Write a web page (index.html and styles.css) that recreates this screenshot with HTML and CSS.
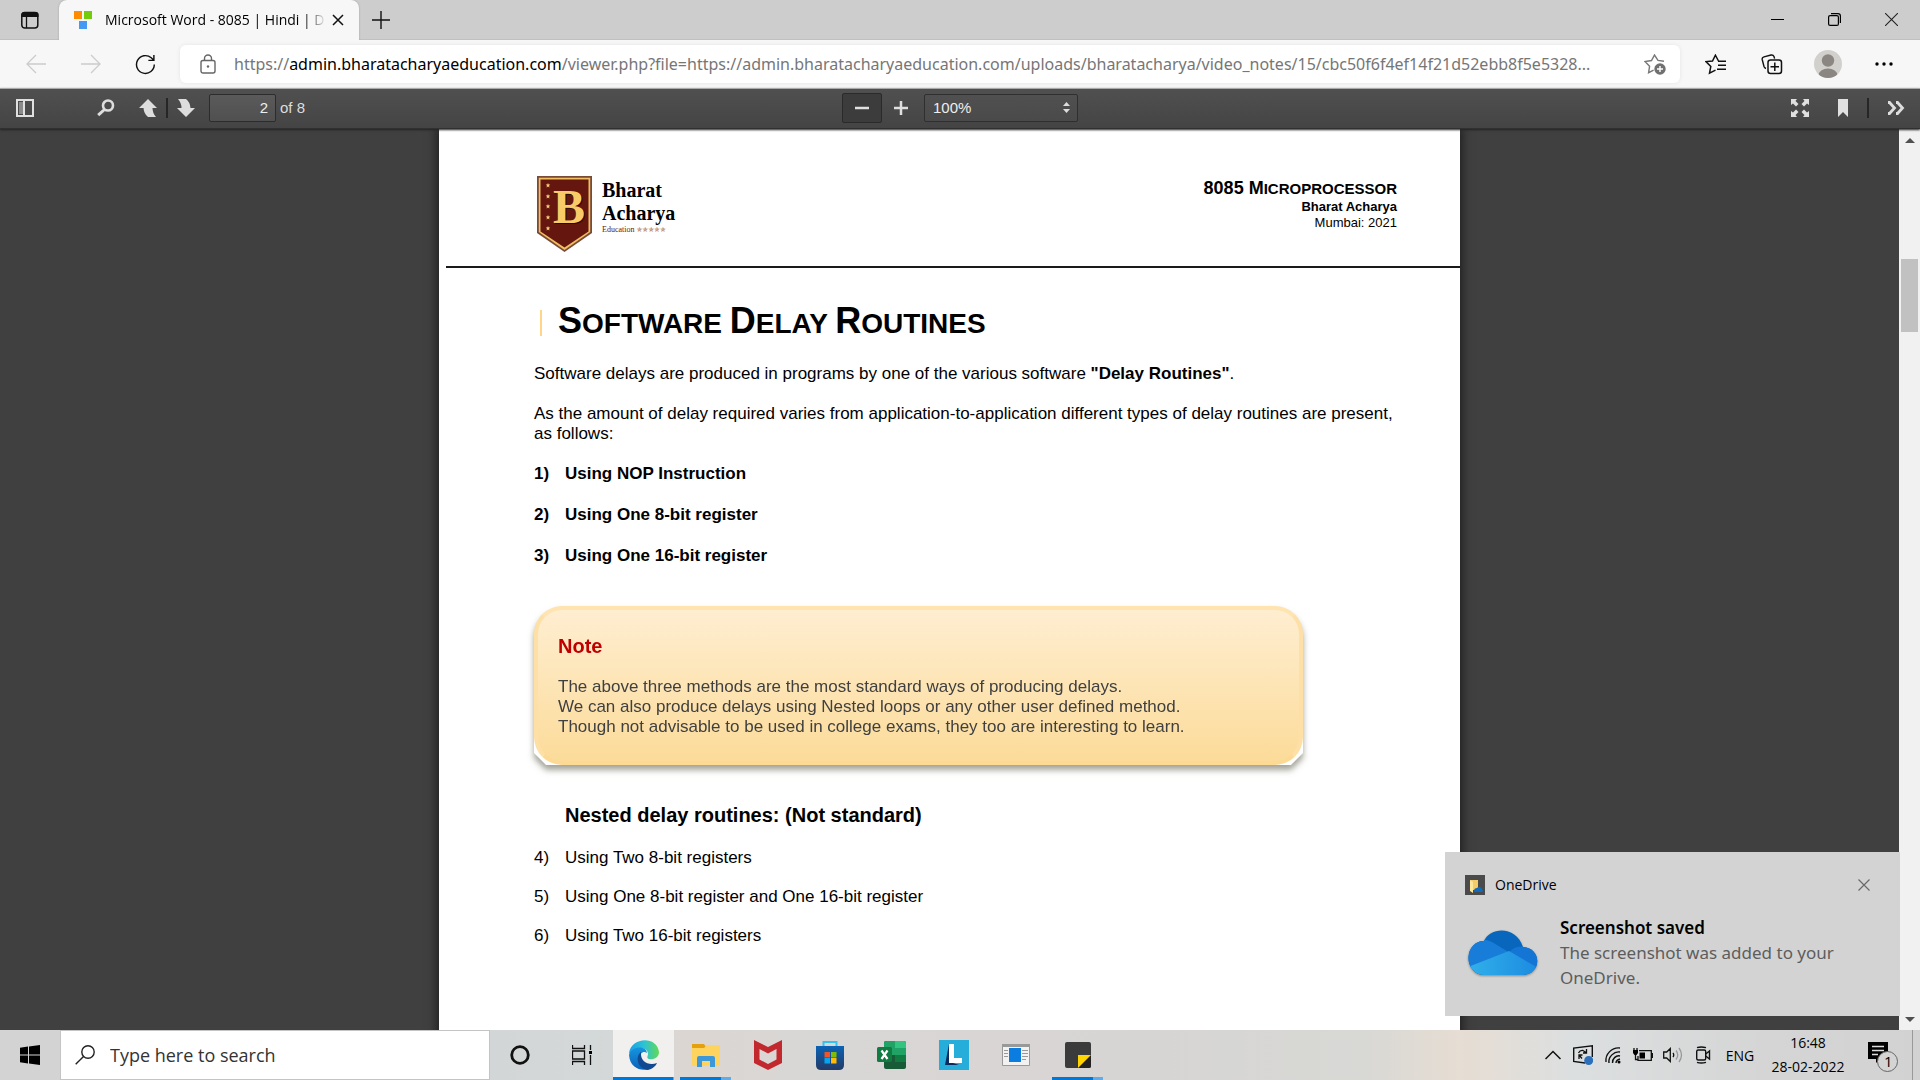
FILE: index.html
```html
<!DOCTYPE html>
<html lang="en">
<head>
<meta charset="utf-8">
<title>Microsoft Word - 8085 | Hindi | Delay Routines</title>
<link rel="stylesheet" href="styles.css">
</head>
<body>
<div class="desktop">
  <header class="tabstrip">
    <button class="tab-actions" aria-label="Tab actions menu"><svg width="20" height="20" viewBox="0 0 20 20"><rect x="1.800" y="2.500" width="16" height="15.500" rx="3" fill="none" stroke="#111" stroke-width="1.500"/><path d="M1.500 7V4.500Q1.500 2 4 2h12q2.500 0 2.500 2.500V7z" fill="#111"/><path d="M6.500 7v11" stroke="#111" stroke-width="1.300"/></svg></button>
    <div class="tab">
      <svg width="18" height="18" viewBox="0 0 18 18"><path fill="#ff8c00" d="M0 0h8v8H0z"/><path fill="#73cc0a" d="M10 0h8v8h-8z"/><path fill="#4499f2" d="M5 10h8v8H5z"/></svg>
      <span class="tab-title">Microsoft Word - 8085 | Hindi | D</span>
      <button class="tab-close" aria-label="Close tab"><svg width="12" height="12" viewBox="0 0 12 12"><path d="M1 1l10 10M11 1L1 11" stroke="#111" stroke-width="1.500"/></svg></button>
    </div>
    <button class="new-tab" aria-label="New tab"><svg width="18" height="18" viewBox="0 0 18 18"><path d="M9 0v18M0 9h18" stroke="#111" stroke-width="1.400"/></svg></button>
    <div class="window-controls">
      <button aria-label="Minimize"><svg width="13" height="13" viewBox="0 0 13 13"><path d="M0 6.500h13" stroke="#000"/></svg></button>
      <button aria-label="Restore"><svg width="13" height="13" viewBox="0 0 13 13"><rect x=".6" y="2.600" width="9.800" height="9.800" rx="1.500" fill="none" stroke="#000" stroke-width="1.200"/><path d="M3 .6h7Q12.400.6 12.400 3v7" fill="none" stroke="#000" stroke-width="1.200"/></svg></button>
      <button aria-label="Close"><svg width="13" height="13" viewBox="0 0 13 13"><path d="M0 0l13 13M13 0L0 13" stroke="#222" stroke-width="1.100"/></svg></button>
    </div>
  </header>

  <nav class="toolbar">
    <button class="nav" aria-label="Back" disabled><svg width="20" height="20" viewBox="0 0 20 20"><path d="M20 10H1M10 1L1 10l9 9" fill="none" stroke="#ccc" stroke-width="1.300"/></svg></button>
    <button class="nav" aria-label="Forward" disabled><svg width="20" height="20" viewBox="0 0 20 20"><path d="M0 10h19M10 1l9 9-9 9" fill="none" stroke="#ccc" stroke-width="1.300"/></svg></button>
    <button class="nav" aria-label="Refresh"><svg width="21" height="21" viewBox="0 0 22 22"><path d="M20.200 11A9.300 9.300 0 1 1 17 4l2.500 2.300M19.800 1v5.700H14" fill="none" stroke="#111" stroke-width="1.500"/></svg></button>
    <div class="address">
      <svg width="16" height="20" viewBox="0 0 16 20"><rect x="1" y="6.500" width="14" height="12.500" rx="2" fill="none" stroke="#666" stroke-width="1.400"/><path d="M4.500 6.500V4.500a3.500 3.500 0 0 1 7 0v2" fill="none" stroke="#666" stroke-width="1.400"/><circle cx="8" cy="12.500" r="1.200" fill="#666"/></svg>
      <span class="url">https://<b>admin.bharatacharyaeducation.com</b>/viewer.php?file=https://admin.bharatacharyaeducation.com/uploads/bharatacharya/video_notes/15/cbc50f6f4ef14f21d52ebb8f5e5328...</span>
      <button class="add-fav" aria-label="Add this page to favorites"><svg width="22" height="21" viewBox="0 0 22 21"><path d="M20 7.200l-6-.8L10.500 1 7.500 6.500 1 7.500l4.600 4.700-1 6.500 5-2.600" fill="none" stroke="#777" stroke-width="1.400"/><circle cx="16" cy="15" r="5.700" fill="#707070"/><path d="M16 12v6M13 15h6" stroke="#fff" stroke-width="1.400"/></svg></button>
    </div>
    <button aria-label="Favorites"><svg width="22" height="21" viewBox="0 0 22 21"><path d="M13.500 7L10.400 1.200 7.500 7 1 7.600l4.800 4.800-1.300 6.800 6-3M13 7.200h8M13 11.200h8M12 15.200h9" fill="none" stroke="#111" stroke-width="1.500"/></svg></button>
    <button aria-label="Collections"><svg width="22" height="21" viewBox="0 0 22 21"><path d="M5 14.500Q3.500 14 3 12.500L1.200 5.500Q.8 3.500 3 2.800L10 1q2.200-.4 3 1.600l.6 2" fill="none" stroke="#111" stroke-width="1.400"/><rect x="7" y="6" width="13.500" height="13.500" rx="2.500" fill="#f7f7f7" stroke="#111" stroke-width="1.500"/><path d="M13.800 8.500v8.500M9.500 12.800H18" stroke="#111" stroke-width="1.500"/></svg></button>
    <button aria-label="Profile"><svg width="28" height="28" viewBox="0 0 28 28"><clipPath id="avatar"><circle cx="14" cy="14" r="14"/></clipPath><g clip-path="url(#avatar)"><path fill="#d2d0cc" d="M0 0h28v28H0z"/><circle cx="14" cy="10.500" r="6.200" fill="#8b8682"/><ellipse cx="14" cy="25.500" rx="9.500" ry="7" fill="#8b8682"/></g></svg></button>
    <button aria-label="Settings and more"><svg width="18" height="4" viewBox="0 0 18 4"><circle cx="2" cy="2" r="1.700"/><circle cx="9" cy="2" r="1.700"/><circle cx="16" cy="2" r="1.700"/></svg></button>
  </nav>

  <div class="pdf-toolbar">
    <div class="pdf-left">
      <button class="toggle-sidebar" aria-label="Toggle sidebar"><svg width="18" height="18" viewBox="0 0 18 18"><path fill="#e0e0e0" fill-rule="evenodd" d="M0 0h18v18H0zM2 2v14h14V2z"/><path fill="#8a8a8a" d="M3 3h4v12H3z"/><path fill="#e0e0e0" d="M7 2h2v14H7z"/></svg></button>
      <button aria-label="Find"><svg width="18" height="18" viewBox="0 0 18 18"><circle cx="11" cy="6.500" r="5" fill="none" stroke="#ddd" stroke-width="2.600"/><path d="M7.500 10.500L1.200 16.200" stroke="#ddd" stroke-width="3"/></svg></button>
      <div class="pager">
        <button aria-label="Previous page"><svg width="18" height="18" viewBox="0 0 18 18"><path fill="#ddd" d="M9 0l9 9h-4.500q0 5 3.500 9H9Q5 15 4.500 9H0z"/></svg></button>
        <i class="split"></i>
        <button aria-label="Next page"><svg width="18" height="18" viewBox="0 0 18 18"><path fill="#ddd" d="M9 18l9-9h-4.500Q13 3 9 0H1q3.500 4 3.500 9H0z"/></svg></button>
      </div>
      <label class="page-field"><input type="text" value="2" aria-label="Page"><span>of 8</span></label>
    </div>
    <div class="pdf-zoom">
      <button class="zoom-out" aria-label="Zoom out"><svg width="14" height="14" viewBox="0 0 14 14"><path d="M0 7h14" stroke="#e0e0e0" stroke-width="2.500"/></svg></button>
      <button class="zoom-in" aria-label="Zoom in"><svg width="14" height="14" viewBox="0 0 14 14"><path d="M0 7h14M7 0v14" stroke="#e0e0e0" stroke-width="2.500"/></svg></button>
      <div class="scale"><select aria-label="Zoom"><option>100%</option></select><svg width="7" height="11" viewBox="0 0 7 11"><path fill="#ddd" d="M3.500 0L7 4H0zM3.500 11L7 7H0z"/></svg></div>
    </div>
    <div class="pdf-right">
      <button aria-label="Presentation mode"><svg width="18" height="18" viewBox="0 0 18 18"><path fill="#e0e0e0" d="M0 0h6L4.500 2l3 3L5 7.500l-3-3L0 6zM18 0v6l-2-1.500-3 3L10.500 5l3-3L12 0zM0 18v-6l2 1.500 3-3L7.500 13l-3 3L6 18zM18 18h-6l1.500-2-3-3 2.500-2.500 3 3 2-1.500z"/></svg></button>
      <button aria-label="Current view"><svg width="12" height="18" viewBox="0 0 12 18"><path fill="#e0e0e0" d="M1 0h10v18l-5-5-5 5z"/></svg></button>
      <i class="split"></i>
      <button aria-label="Tools"><svg width="18" height="14" viewBox="0 0 18 14"><path d="M1 1.500h1.500L7.500 7l-5 5.500H1M9 1.500h1.500L15.500 7l-5 5.500H9" fill="none" stroke="#ddd" stroke-width="2.800"/></svg></button>
    </div>
  </div>

  <main class="viewer">
    <div class="canvas">
      <article class="page">
        <header class="page-head">
          <div class="brand">
            <svg width="55" height="76" viewBox="0 0 55 76"><path fill="#7a4a35" d="M0 0h55v57L27.500 76 0 57z"/><path fill="#f0bf62" d="M1.800 1.800h51.400V56L27.500 74 1.800 56z"/><path fill="#65160f" d="M3.500 3.500h48v52l-24 16-24-16z"/><g fill="#f7cc7a"><path id="star" d="M11 7l.7 1.500h1.600L12 9.700l.5 1.700L11 10.500l-1.500.9.500-1.700-1.300-1.200h1.600z"/><use href="#star" y="11"/><use href="#star" y="21"/><use href="#star" y="32"/><use href="#star" y="43"/></g><text x="17" y="48" class="crest-shadow">B</text><text x="16" y="47" class="crest">B</text></svg>
            <div class="brand-name"><strong>Bharat</strong><strong>Acharya</strong><small>Education <span>✯✯✯✯✯</span></small></div>
          </div>
          <div class="course"><p class="course-title"><span>8085 M</span>icroprocessor</p><p class="author">Bharat Acharya</p><p class="place">Mumbai: 2021</p></div>
        </header>
        <div class="page-body">
          <h1><span>S</span>oftware <span>D</span>elay <span>R</span>outines</h1>
          <p>Software delays are produced in programs by one of the various software <b>"Delay Routines"</b>.</p>
          <p>As the amount of delay required varies from application-to-application different types of delay routines are present,<br>as follows:</p>
          <ol class="methods">
            <li><span>1)</span>Using NOP Instruction</li>
            <li><span>2)</span>Using One 8-bit register</li>
            <li><span>3)</span>Using One 16-bit register</li>
          </ol>
          <section class="note">
            <div class="note-face">
              <h2>Note</h2>
              <p>The above three methods are the most standard ways of producing delays.<br>We can also produce delays using Nested loops or any other user defined method.<br>Though not advisable to be used in college exams, they too are interesting to learn.</p>
            </div>
          </section>
          <h3>Nested delay routines: (Not standard)</h3>
          <ol class="nested">
            <li><span>4)</span>Using Two 8-bit registers</li>
            <li><span>5)</span>Using One 8-bit register and One 16-bit register</li>
            <li><span>6)</span>Using Two 16-bit registers</li>
          </ol>
        </div>
      </article>
    </div>
    <div class="scrollbar"><svg width="10" height="5" viewBox="0 0 10 5"><path fill="#505050" d="M0 5l5-5 5 5z"/></svg><div class="track"><div class="thumb"></div></div><svg width="10" height="5" viewBox="0 0 10 5"><path fill="#505050" d="M0 0l5 5 5-5z"/></svg></div>
    <aside class="toast">
      <div class="toast-head">
        <svg width="20" height="20" viewBox="0 0 20 20"><path fill="#4a4a4a" d="M0 0h20v20H0z"/><path fill="#f4cd68" d="M5 5h8v10H7z"/><path fill="#ffe79c" d="M5 5l3 2v11l-3-2z"/><path fill="#0f6cbd" d="M9 15a3 3 0 0 1 3-2 3 3 0 0 1 5 1 1.800 1.800 0 0 1 0 3h-7q-1.500-.6-1-2z"/></svg>
        <span>OneDrive</span>
        <button aria-label="Dismiss"><svg width="12" height="12" viewBox="0 0 12 12"><path d="M.5.5l11 11M11.500.5l-11 11" stroke="#666" stroke-width="1.100"/></svg></button>
      </div>
      <div class="toast-body">
        <svg class="cloud" width="70" height="46" viewBox="0 0 70 46"><defs><clipPath id="cloud"><path d="M15 45A15 17 0 0 1 16 11C22-3 48-5 55 17 74 18 74 44 55 45z"/></clipPath><linearGradient id="sky" x2="1"><stop stop-color="#31b0ea"/><stop offset="1" stop-color="#1c8be0"/></linearGradient></defs><g clip-path="url(#cloud)"><path fill="#0867bd" d="M0 0h70v46H0z"/><path fill="#187dd9" d="M0 11q15-4 24 1l18 11L2 38H0z"/><path fill="#1475d5" d="M41 22q7-7 18-5l12 4v19z"/><path fill="url(#sky)" d="M0 37l41-16 29 17v8H0z"/></g></svg>
        <div><strong>Screenshot saved</strong><p>The screenshot was added to your OneDrive.</p></div>
      </div>
    </aside>
  </main>

  <footer class="taskbar">
    <button class="start" aria-label="Start"><svg width="20" height="20" viewBox="0 0 20 20"><path d="M0 2.800L8 1.600V9.500H0zM9 1.400L20 0v9.500H9zM0 10.500h8v7.900L0 17.200zM9 10.500h11V20L9 18.600z"/></svg></button>
    <label class="search"><svg width="20" height="20" viewBox="0 0 20 20"><circle cx="13" cy="7" r="6.200" fill="none" stroke="#222" stroke-width="1.400"/><path d="M8.500 11.500L.7 19.300" stroke="#222" stroke-width="1.400"/></svg><input type="text" placeholder="Type here to search" aria-label="Search"></label>
    <div class="apps">
      <button class="cortana" aria-label="Cortana"><svg width="20" height="20" viewBox="0 0 20 20"><circle cx="10" cy="10" r="8.300" fill="none" stroke="#111" stroke-width="2.800"/></svg></button>
      <button aria-label="Task view"><svg width="20" height="20" viewBox="0 0 20 20"><path d="M.5 0v3.500h12V0M.5 20v-3.500h12V20M.5 6h12v8H.5zM18.500 0v5M18.500 10v10" fill="none" stroke="#111" stroke-width="1.300"/><path d="M17 6h3v3h-3z"/></svg></button>
      <button class="active" aria-label="Microsoft Edge"><svg width="30" height="30" viewBox="0 0 30 30"><defs><linearGradient id="e1" x2="1"><stop stop-color="#1b9de2"/><stop offset=".5" stop-color="#2cc3d5"/><stop offset="1" stop-color="#62d957"/></linearGradient><linearGradient id="e2" y2="1" x2="0"><stop stop-color="#1594df"/><stop offset="1" stop-color="#0b62b8"/></linearGradient></defs><path fill="url(#e1)" d="M0 14C1-3 28-5 30 12c0 6-6 8-10 7-3-1-1-3-1-5C19 7 7 5 0 14z"/><path fill="url(#e2)" d="M0 15C2 6 17 5 18 13c-4-3-8 1-7 6 1 8 8 10 14 7-7 7-24 5-25-11z"/><path fill="#114a91" d="M12 12c-6 4-4 17 7 18 4-1 8-4 9-7-8 3-17-1-16-11z"/></svg></button>
      <button class="running" aria-label="File Explorer"><svg width="28" height="24" viewBox="0 0 28 24"><path fill="#e5a00d" d="M0 1h12l2 3v4H0z"/><path fill="#ffd45e" d="M0 5h12l3-3h13v21H0z"/><path fill="#3d98d9" d="M5 24V15q0-2 2-2h14q2 0 2 2v9h-5v-6h-8v6z"/></svg></button>
      <button aria-label="McAfee"><svg width="28" height="30" viewBox="0 0 28 30"><path fill="#c2292e" fill-rule="evenodd" d="M0 0l14 7L28 0v23l-14 7-14-7zM5.500 9v10.500L14 24l8.500-4.500V9L14 13.500z"/></svg></button>
      <button aria-label="Microsoft Store"><svg width="30" height="30" viewBox="0 0 30 30"><defs><linearGradient id="bag" y2="1" x2="0"><stop stop-color="#0b63b5"/><stop offset="1" stop-color="#243a66"/></linearGradient></defs><path d="M8.500 7V2h13v5" fill="none" stroke="#35c2ee" stroke-width="2"/><path fill="url(#bag)" d="M1 6h28v19q0 5-5 5H6q-5 0-5-5z"/><path fill="#f35325" d="M9.500 12H15v5.500H9.500z"/><path fill="#81bc06" d="M16 12h5.500v5.500H16z"/><path fill="#05a6f0" d="M9.500 18H15v5.500H9.500z"/><path fill="#ffba08" d="M16 18h5.500v5.500H16z"/></svg></button>
      <button aria-label="Excel"><svg width="30" height="28" viewBox="0 0 30 28"><rect x="7" width="22" height="28" rx="2" fill="#185c37"/><path fill="#21a366" d="M7 2q0-2 2-2h9v14H7z"/><path fill="#33c481" d="M18 0h9q2 0 2 2v5H18z"/><path fill="#21a366" d="M18 7h11v7H18z"/><path fill="#107c41" d="M18 14h11v7H18z"/><rect y="6" width="15" height="15" rx="1.500" fill="#107c41"/><path d="M4.500 9.500l6 8.500M10.500 9.500l-6 8.500" stroke="#fff" stroke-width="2.200"/></svg></button>
      <button aria-label="Lenovo"><svg width="30" height="30" viewBox="0 0 30 30"><path fill="#27add9" d="M0 0h30v30H0z"/><path fill="#0b2a5e" d="M10 4L6 25h14l-9-3z"/><path fill="#fff" d="M10 4h5v14h8v5H10z"/></svg></button>
      <button aria-label="App window"><svg width="28" height="22" viewBox="0 0 28 22"><path fill="#f2f2f2" stroke="#999" d="M.5.5h27v21H.5z"/><path fill="#999" d="M0 0h28v3H0z"/><path fill="#0b7de0" d="M7 4h12v14H7z"/><path d="M2 6.500h4M2 9.500h4M2 12.500h4M20 6.500h6M20 9.500h6M20 12.500h6M20 15.500h4" stroke="#999"/></svg></button>
      <button class="running" aria-label="Sticky Notes"><svg width="26" height="26" viewBox="0 0 26 26"><rect width="26" height="26" rx="2" fill="#3b3b3b"/><path fill="#222" d="M13 13h13v11q0 2-2 2H13z"/><path fill="#ffd400" d="M13 13h13L13 26z"/></svg></button>
    </div>
    <div class="tray">
      <button aria-label="Show hidden icons"><svg width="16" height="10" viewBox="0 0 16 10"><path d="M.5 9L8 1.500 15.500 9" fill="none" stroke="#111" stroke-width="1.500"/></svg></button>
      <button aria-label="Sync status"><svg width="20" height="20" viewBox="0 0 20 20"><path d="M12 18L.7 16.500V3L19.300.8V12" fill="none" stroke="#111" stroke-width="1.400"/><path d="M5.500 8Q7 5 10 5.500l3 2M13.500 4v4H10M6 14v-4h3.500M6 10l3 3.500" fill="none" stroke="#111" stroke-width="1.300"/><circle cx="15.700" cy="15.500" r="4.500" fill="#2c6fba"/></svg></button>
      <button aria-label="Network"><svg width="18" height="18" viewBox="0 0 18 18"><path d="M2 16C1 8 8 1 16 2M5 17C4 11 10 5 16 6M8.500 17C8 13 12 9 16 10M12 17q0-3 4-4" fill="none" stroke="#111" stroke-width="1.400"/><circle cx="15" cy="16" r="1.500"/></svg></button>
      <button aria-label="Battery"><svg width="20" height="14" viewBox="0 0 20 14"><path d="M6 2.700h12.300v9.600H5V8M19.500 5v5M1 0v3M4 0v3M2.500 5v6.500H5" fill="none" stroke="#111" stroke-width="1.300"/><path d="M0 2h5v3L3.500 7h-2L0 5zM6.500 4.500H12v6H6.500z"/></svg></button>
      <button aria-label="Volume"><svg width="20" height="16" viewBox="0 0 20 16"><path d="M.7 5v6h3L7.300 14.500v-13L3.700 5zM10 6q1.500 2 0 4" fill="none" stroke="#111" stroke-width="1.300"/><path d="M13 3.500q3.500 4.500 0 9M16 1q5 7 0 14" fill="none" stroke="#999" stroke-width="1.300"/></svg></button>
      <button aria-label="Meet now"><svg width="16" height="18" viewBox="0 0 16 18"><rect x="1.700" y="4" width="9" height="10" rx="1.500" fill="none" stroke="#111" stroke-width="1.400"/><path d="M10.700 8L14.500 5v8l-3.800-3M2 1.700q4-1.500 9 0M2 16.300q4 1.500 9 0" fill="none" stroke="#111" stroke-width="1.400"/></svg></button>
      <button class="lang">ENG</button>
      <button class="clock"><span>16:48</span><span>28-02-2022</span></button>
      <button class="alerts" aria-label="Notifications"><svg width="30" height="30" viewBox="0 0 30 30"><path d="M0 0h20v17h-8l-4 4v-4H0z"/><path d="M4 4.500h12M4 8.500h12M4 12.500h6" stroke="#ddd" stroke-width="1.300"/><circle cx="19.500" cy="19.500" r="10" fill="#d4d4d4" stroke="#666"/><text x="16" y="25" class="count">1</text></svg></button>
      <i class="peek"></i>
    </div>
  </footer>
</div>
</body>
</html>
```
FILE: styles.css
```css
* { box-sizing: border-box; }
body { margin: 0; font-family: "Open Sans", "Noto Sans", sans-serif; color: #000; }
button { border: 0; padding: 0; background: none; font: inherit; color: inherit; display: flex; align-items: center; justify-content: center; }
svg { display: block; flex: none; }
p, h1, h2, h3, ol { margin: 0; padding: 0; }

.desktop { height: 100vh; display: flex; flex-direction: column; overflow: hidden; }

/* Tab strip */
.tabstrip { flex: none; height: 40px; display: flex; background: #cdcdcd; border-bottom: 1px solid #c0c0c0; }
.tab-actions { width: 59px; }
.tab { width: 300px; height: 40px; display: flex; align-items: center; padding: 0 15px; background: #f7f7f7; border-radius: 8px 8px 0 0; box-shadow: 0 0 2px #999; clip-path: inset(-3px -3px 0 -3px); }
.tab-title { flex: 1; margin: 0 6px 0 13px; font-size: 14px; line-height: 20px; white-space: nowrap; -webkit-mask-image: linear-gradient(90deg, #000 90%, transparent); mask-image: linear-gradient(90deg, #000 90%, transparent); }
.tab-close { width: 12px; height: 20px; }
.new-tab { width: 44px; }
.window-controls { margin-left: auto; display: flex; }
.window-controls button { width: 57px; }

/* Browser toolbar */
.toolbar { flex: none; height: 48px; display: flex; align-items: center; padding: 0 8px; background: #f7f7f7; }
.toolbar > button { width: 56px; height: 38px; }
.toolbar > .nav { width: 55px; }
.address { flex: 1; min-width: 0; height: 38px; margin: 0 8px 0 7px; padding: 0 14px 0 20px; display: flex; align-items: center; background: #fff; border-radius: 6px; box-shadow: 0 0 4px #e4e4e4; }
.url { flex: 1; min-width: 0; margin-left: 18px; font: 16px/24px "Noto Sans", "Open Sans", sans-serif; color: #767676; white-space: nowrap; overflow: hidden; }
.url b { font-weight: 400; color: #000; }

/* Document viewer controls */
.pdf-toolbar { flex: none; height: 41px; display: grid; grid-template-columns: 1fr auto 1fr; align-items: center; background: linear-gradient(#505050, #444); border-top: 1px solid #aaa; border-bottom: 1px solid #303030; box-shadow: 0 1px 2px #222; color: #ddd; font: 15px "Liberation Sans", Arial, sans-serif; z-index: 1; }
.pdf-left, .pdf-right, .pdf-zoom, .pager, .page-field { display: flex; align-items: center; }
.pdf-toolbar > div { padding-bottom: 2px; }
.pdf-left { padding-left: 16px; gap: 24px; }
.toggle-sidebar { margin-right: 39px; }
.pager { gap: 9px; }
.split { width: 2px; height: 20px; background: #262626; }
.page-field { margin-left: -10px; gap: 4px; }
.page-field input { width: 67px; height: 28px; padding: 0 7px; text-align: right; color: #eee; background: linear-gradient(#5a5a5a, #505050); border: 1px solid #2c2c2c; border-radius: 2px; font: inherit; }
.zoom-out { width: 40px; height: 30px; background: #3c3c3c; border: 1px solid #2a2a2a; border-radius: 2px; }
.zoom-in { width: 38px; height: 30px; }
.scale { display: grid; align-items: center; margin-left: 4px; }
.scale select, .scale svg { grid-area: 1 / 1; }
.scale svg { justify-self: end; margin-right: 8px; pointer-events: none; }
.scale select { appearance: none; width: 154px; height: 28px; padding: 0 8px; color: #eee; background: linear-gradient(#505050, #4a4a4a); border: 1px solid #2f2f2f; border-radius: 2px; font: inherit; }
.pdf-right { justify-content: flex-end; gap: 18px; padding-right: 15px; }
.pdf-right button:first-child { margin-right: 10px; }

/* Viewer */
.viewer { flex: 1; min-height: 0; display: flex; position: relative; background: #404040; }
.canvas { flex: 1; display: flex; justify-content: center; overflow: hidden; }
.page { width: 1021px; min-height: 1200px; background: #fff; box-shadow: 0 0 10px 2px #1c1c1c; font-family: "Liberation Sans", Arial, sans-serif; font-size: 17px; line-height: 20px; }
.page-head { height: 139px; margin-left: 7px; padding: 47px 63px 0 91px; display: flex; justify-content: space-between; border-bottom: 2px solid #1a1a1a; }
.brand { display: flex; gap: 10px; }
.crest, .crest-shadow { font: bold 48px "Liberation Serif", serif; fill: #f9cb68; }
.crest-shadow { fill: #2d0805; }
.brand-name { display: flex; flex-direction: column; padding-top: 3px; font-family: "Liberation Serif", "Times New Roman", serif; }
.brand-name strong { font-size: 20px; line-height: 23px; }
.brand-name small { font-size: 8px; line-height: 9px; color: #65160f; white-space: nowrap; }
.brand-name small span { color: #a5673f; font-family: "DejaVu Sans", sans-serif; font-size: 7px; }
.course { text-align: right; padding-top: 2px; }
.course-title { text-transform: uppercase; font-weight: 700; font-size: 15px; line-height: 20px; }
.course-title span { font-size: 18px; }
.author { font-weight: 700; font-size: 13px; line-height: 16px; }
.place { font-size: 13px; line-height: 16px; }

.page-body { padding: 33px 63px 0 95px; }
h1 { margin: 0 0 20px 5px; padding-left: 19px; font-size: 28px; line-height: 40px; text-transform: uppercase; background: linear-gradient(#ffd58a, #ffd58a) 1px 50% / 2px 26px no-repeat; }
h1 span { font-size: 36px; }
.page-body > p { margin-bottom: 20px; white-space: nowrap; }
.page-body li { display: flex; }
.page-body li span { width: 31px; }
.methods { font-weight: 700; display: flex; flex-direction: column; gap: 21px; }
.nested { display: flex; flex-direction: column; gap: 19px; }
.note { position: relative; max-width: 769px; margin: 40px 0 38px; filter: drop-shadow(0 5px 3px rgba(70, 70, 50, .5)); }
.note::before { content: ""; position: absolute; inset: 30px 0 0; background: #fff; clip-path: polygon(0 0, 100% 0, 100% calc(100% - 12px), calc(100% - 12px) 100%, 12px 100%, 0 calc(100% - 12px)); }
.note-face { position: relative; padding: 24px 20px; border: 4px solid; border-color: #ffe4b0 #fee0a6 #fdda94; border-radius: 28px; background: linear-gradient(#feeed2, #fcdb98) border-box; color: #404040; }
.note h2 { margin-bottom: 19px; font-size: 20px; line-height: 24px; color: #c00000; }
h3 { margin: 0 0 21px 31px; font-size: 20px; line-height: 24px; }

.scrollbar { width: 21px; display: flex; flex-direction: column; align-items: center; padding: 9px 0 8px; background: #f1f1f1; }
.track { flex: 1; align-self: stretch; padding: 116px 2px 0; }
.thumb { height: 73px; background: #c1c1c1; }

/* Notification */
.toast { position: absolute; right: 20px; bottom: 14px; width: 455px; height: 164px; padding: 23px 30px 0 20px; background: #d3d3d3; }
.toast-head { display: flex; align-items: center; gap: 10px; font-size: 14px; line-height: 20px; }
.toast-head button { margin-left: auto; width: 12px; height: 18px; }
.toast-body { display: flex; gap: 22px; padding: 20px 0 0 3px; font: 17px/25px "Noto Sans", "Open Sans", sans-serif; }
.toast-body .cloud { margin-top: 15px; filter: drop-shadow(0 1px 1px #888); }
.toast-body p { color: #5d5d5d; }
.toast-body strong { font-weight: 600; }

/* Taskbar */
.taskbar { flex: none; height: 50px; display: flex; background: linear-gradient(90deg, #d3d3d3 0, #d4d4d4 20%, #d3d8d8 31%, #dcd6d2 36%, #d7d7d6 43%, #dad5d5 50%, #d6d5d4 60%, #d8d8d5 71%, #e6ddd3 76%, #dcdfe0 82%, #d5d5d5 92%, #d2d2d2); font-size: 14px; }
.start { width: 60px; }
.search { width: 430px; display: flex; align-items: center; gap: 15px; padding: 0 14px; background: #fff; border: 1px solid #c4c4c4; }
.search input { flex: 1; min-width: 0; border: 0; padding: 0; font: 18px "Open Sans", sans-serif; outline: 0; }
.search input::placeholder { color: #333; }
.apps { display: flex; gap: 1px; }
.apps button { width: 61px; height: 50px; border-bottom: 3px solid transparent; padding-top: 2px; }
.apps .cortana { width: 60px; }
.apps .active { background: #f1f0ef; border-image: linear-gradient(90deg, #0078d7 93%, #62abe6 93%) 3; }
.apps .running { background: linear-gradient(90deg, #0078d7 80%, #62abe6 80%) 50% 100% / 51px 3px no-repeat border-box; }
.tray { margin-left: auto; display: flex; align-items: center; }
.tray button { width: 30px; height: 50px; }
.tray .lang { width: 44px; }
.tray .clock { width: 92px; flex-direction: column; line-height: 24px; }
.tray .alerts { width: 58px; padding-top: 4px; }
.count { font: 15px "Open Sans", sans-serif; }
.peek { width: 8px; height: 50px; border-left: 1px solid #999; }
```
